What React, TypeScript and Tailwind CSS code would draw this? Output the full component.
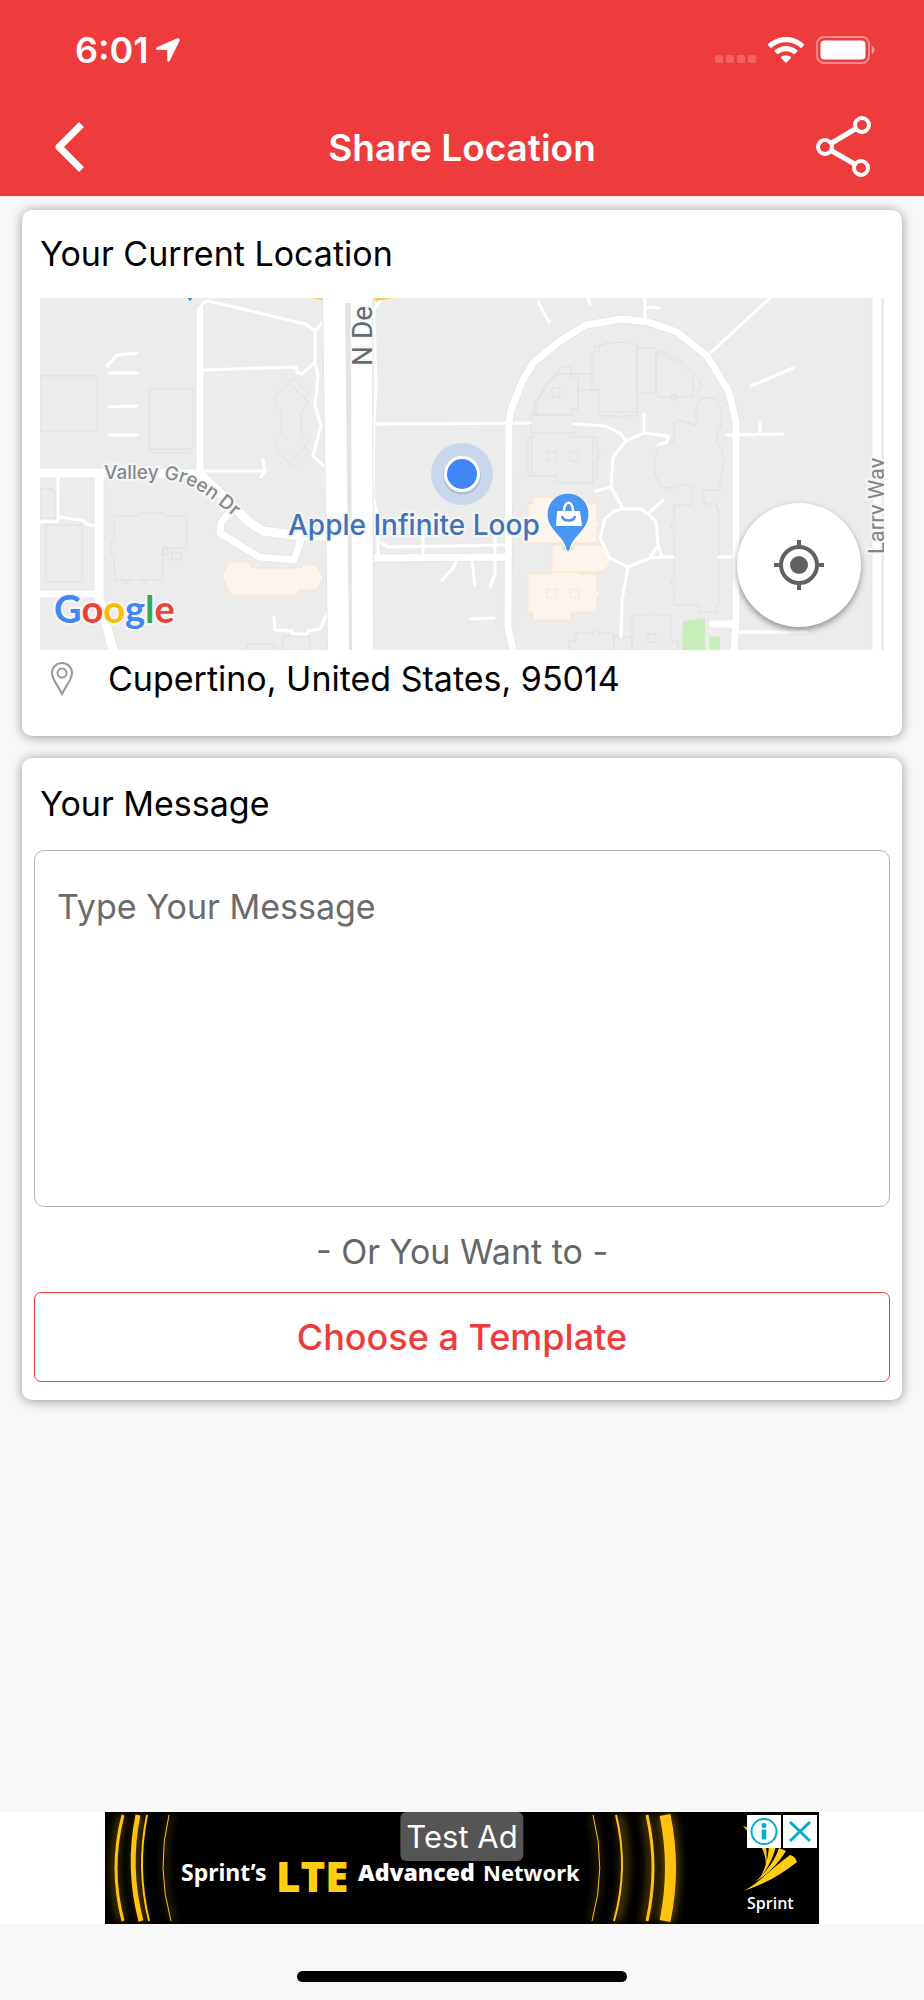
import type { ReactNode } from "react";

function StatusBar() {
  return (
    <div className="flex items-center justify-between pl-[75px] pr-12 pt-8 text-white">
      <div className="flex items-center gap-2">
        <span className="text-[36px] font-semibold leading-9">6:01</span>
        <svg className="h-6 w-6" viewBox="0 0 24 24" fill="currentColor" aria-hidden="true">
          <path d="M21.4.3.9 9.3C-.5 10-.2 11.8 1.300 11.800l9.800.200.100 10c0 1.900 2 2.200 2.700.600L23.700 2.600c.6-1.600-.7-2.900-2.300-2.300z" />
        </svg>
      </div>
      <div className="flex items-center gap-3">
        <div className="flex gap-[3px] pt-[18px]">
          <span className="h-2 w-2 rounded-xs bg-white/20" />
          <span className="h-2 w-2 rounded-xs bg-white/20" />
          <span className="h-2 w-2 rounded-xs bg-white/20" />
          <span className="h-2 w-2 rounded-xs bg-white/20" />
        </div>
        <svg className="h-[27px] w-9" viewBox="0 0 36 27" fill="currentColor" aria-hidden="true">
          <path d="M18 0C11 0 4.700 2.700 0 7.200c-.3.3-.3.700 0 1l2.500 2.500c.3.3.7.3 1 0C7.300 7.200 12.400 5.200 18 5.200s10.700 2 14.500 5.500c.3.3.7.3 1 0L36 8.200c.3-.3.3-.7 0-1C31.300 2.700 25 0 18 0z" />
          <path d="M18 9c-4.400 0-8.400 1.700-11.400 4.400-.3.300-.3.700 0 1l2.700 2.700c.3.300.7.3 1 0 2-1.800 4.700-2.900 7.700-2.900s5.700 1.100 7.700 2.900c.3.3.7.3 1 0l2.700-2.700c.3-.3.3-.7 0-1C26.400 10.700 22.400 9 18 9z" />
          <path d="M18 18.200c-1.900 0-3.600.7-4.900 1.800-.3.3-.3.700 0 1l4.400 4.600c.3.3.7.3 1 0l4.400-4.600c.3-.3.3-.7 0-1-1.300-1.100-3-1.800-4.900-1.800z" />
        </svg>
        <svg className="h-7 w-[60px]" viewBox="0 0 60 28" aria-hidden="true">
          <rect x="1" y="1" width="52" height="26" rx="7" fill="none" stroke="white" strokeOpacity="0.4" strokeWidth="2" />
          <rect x="4.500" y="4.500" width="45" height="19" rx="4" fill="white" />
          <path d="M55.500 10c2 .500 3 2 3 4s-1 3.500-3 4z" fill="white" fillOpacity="0.5" />
        </svg>
      </div>
    </div>
  );
}

function Header() {
  return (
    <header className="bg-[#ee3b3b] pb-4">
      <StatusBar />
      <div className="grid grid-cols-[1fr_auto_1fr] items-center pl-[50px] pr-[50px] pt-12 text-white">
        <button type="button" aria-label="Back" className="flex justify-start">
          <svg className="h-[60px] w-10" viewBox="0 0 40 60" fill="none" stroke="white" strokeWidth="7" strokeLinejoin="round">
            <path d="M31.500 6.500 9 29l22.500 22.500" />
          </svg>
        </button>
        <h1 className="text-[37px] font-semibold leading-[60px]">Share Location</h1>
        <button type="button" aria-label="Share" className="flex justify-end">
          <svg className="h-[64px] w-[60px]" viewBox="0 0 60 64" fill="none" stroke="white" strokeWidth="4">
            <circle cx="48" cy="9" r="7" />
            <circle cx="11" cy="31" r="7" />
            <circle cx="47" cy="52" r="7" />
            <path d="M17 27.500 42 12.500M17 34.500l24.500 14" strokeWidth="5" />
          </svg>
        </button>
      </div>
    </header>
  );
}

function MapView() {
  return (
    <div className="relative">
      <svg
        className="block h-[352px] w-full"
        viewBox="40 298 844 352"
        preserveAspectRatio="xMidYMid slice"
        role="img"
        aria-label="Map of Apple Infinite Loop"
        strokeLinejoin="round"
      >
        <rect x="40" y="298" width="844" height="352" fill="#ececec" />

        {/* buildings */}
        <g fill="none" stroke="#dfdfdf" strokeWidth="1">
          <path d="M40 376h57v55H40zM149 389h44v60h-44zM152 449h38v4h-38z" />
          <path d="m293 378 16 15-5 5 5 5-8 8v23l8 8-5 5 5 5-15 16-18-19v-10l5-5v-23l-6-6v-9zM289 383l15 15M304 447l-15 15" />
          <path d="M40 489h13v4h3v25H40zM46 525h36v57H46z" />
          <path d="M114 516h25v-3h24v3h24v32h-24v32h-48l-1-23-3-1v-16h3zM172 552h9v8h-9zM163 549h5v6h-5zM124 580v3h5v-3M143 580v3h3v-3" />
          <path d="M247 644h26v6h-26zM283 636h27v14h-27zM273 647h10" />
          <path d="M533 415l2-12 10-18 17-18h9v11h7v31h-7v6zM536 415v-12l10-16 11-13h36M578 378v37M552 388h8v9h-8zM578 390h21M531 415h43v18h-43z" />
          <path d="M533 433v4h-5v39h28v7h37v-7h4v-39h-29v-4M593 437v39M532 437v39M597 452a3 3 0 0 1 0 6M547 452h9v9h-9zM570 452h9v9h-9z" />
          <path d="M592 352h7v-6l9-3 20-1 9 3v71h-17l-2 3-2-3h-17v-26h-7zM595 352v-6h6M599 412h38M637 348h19v45h-19z" />
          <path d="M656 352h10l17 11 17 17v11h-7v6h-35l-2-4zM656 355h9l16 10 12 12v14" />
          <circle cx="674" cy="397" r="3" />
          <path d="M696 425v-17l4-8 8-3 9 3 4 8v19l-4 1v15l5 7 2 13-4 17v10h-16v14h13v6h2v95h-2v7h-18v-7h-25v-20a3 3 0 0 1 0-6v-50a3 3 0 0 1 0-6v-18h18v-20h-14v3h-15l-8-13-1-13 4-14 8-6h8v-18l3-4z" />
          <path d="M632 650v-35h18a3 3 0 0 1 5 0h16v26h7v9zM648 634h8v8h-8zM569 650v-9h7v-8h17a3 3 0 0 1 6 0h15v17zM614 637h18v13h-18z" />
        </g>
        <g fill="#fdf5ed" stroke="#fbe3c8" strokeWidth="1">
          <path d="m222 577 7-15h20l3 6h49l2-3h13l7 13-6 12h-19v5h-65l-4-4z" />
          <path d="M528 504h5v-7h38v7h26v16a3 3 0 0 1 0 6v17h-69zM528 574h24v-2h28v2h17v17a3 3 0 0 1 0 6v15h-26v8h-38v-8h-5z" />
          <path d="M552 545h45a13 13 0 0 1 0 27h-45zM547 589h9v9h-9zM570 589h9v9h-9z" />
        </g>
        <path d="m683 621 22-3v32h-23zM709 636l11 1v13h-10z" fill="#c8eebb" />

        {/* roads, each drawn over a faint casing */}
        <g fill="none" strokeLinecap="round">
          <g stroke="#e6e6e6">
            <path strokeWidth="9" d="M200 310v160M227 515l-6 8-1 10 39 24 35 3 7-20M40 594h59M372 558l135-1M513 650l-5-23 1-204 2-13 11-28 11-19 27-22 26-16 36-6 26 3 29 10 30 24 22 36 7 30v201l-2 27" />
            <path strokeWidth="11" d="M40 473h70l90 1 20 19 30 30 13 8 37 5h27M99 473v124l14 53M877 290v370" />
          </g>
          <g stroke="white">
            <path strokeWidth="7" d="M200 310v160M227 515l-6 8-1 10 39 24 35 3 7-20M40 594h59M372 558l135-1M513 650l-5-23 1-204 2-13 11-28 11-19 27-22 26-16 36-6 26 3 29 10 30 24 22 36 7 30v201l-2 27M712 624h24" />
            <path strokeWidth="9" d="M40 473h70l90 1 20 19 30 30 13 8 37 5h27M99 473v124l14 53M877 290v370" />
            <path
              strokeWidth="3"
              d="M200 308l3-5 6-2 96 23 10 7 7-8h5M315 331v31l3 13-3 30 6 21-8 30 14 13M315 362l-13 12-5-2-1-5-93 3M107 366l10-11 20-2M109 373h28M109 407l28-1M109 435h28M204 471h61M263 460l2 11-4 6M58 477v43M40 523l3-2 14 1 2-5 23 3 5 4 8 2M274 617l1 13 17 1 1 3h14l1-3 12-2 8-17M300 323l6 1"
            />
            <path
              strokeWidth="3"
              d="M382 298l-8 12 2 77-2 40-1 70 3 13 2 30v16M380 542l8 5 117-2M423 527v26M495 537v37l-5 13M456 561l-2 6-12 13M472 561l3 24M471 619l23-1M373 424l157-1M538 302l11 20M588 298l2 6"
            />
            <path
              strokeWidth="3"
              d="M574 424l31 2 15 7 6 8 18-8 24 3-1 6-9 3M644 433v-19M626 441l-13 16-2 30 12 22M596 491l15-4M623 509h18l7 5 8 8 2 23-8 13-22 9-18-9-10-20 5-19 9-8zM648 514l15-14M658 545l4 12-12 1M662 557h11M628 567l-6 33-1 37M719 557h14M645 298v23M645 307l14 1M707 356l63-58M751 386l42-18M727 435l56-1M760 422v12M740 632h67"
            />
          </g>
        </g>
        <path d="M322 298h51l1 352H327z" fill="#e4e4e4" />
        <path d="M323 298h28v5h-6l4 347h-21z" fill="white" />
        <path d="M351 298h21l1 352h-21z" fill="white" />
        <path d="M311 298h11v2zM374 298h21l-19 3z" fill="#fbc95a" />
        <path d="M186 297h8l-4 5z" fill="#4285f4" stroke="white" />

        {/* labels */}
        <g stroke="#f6f6f6" strokeWidth="4" style={{ paintOrder: "stroke" }} fontFamily="Inter, sans-serif">
          <path id="valley-green" d="M104 479H160C190 480 205 493 245 526" fill="none" stroke="none" />
          <text fontSize="19" fontWeight="500" fill="#85898c">
            <textPath href="#valley-green">Valley Green Dr</textPath>
          </text>
          <text x="288" y="535" fontSize="28" fontWeight="500" fill="#4173b5">
            Apple Infinite Loop
          </text>
          <text transform="translate(372 366) rotate(-90)" fontSize="28" fontFamily="Roboto, sans-serif" fill="#5f6b70">
            N De
          </text>
          <text transform="translate(884 554) rotate(-90)" fontSize="22" fontFamily="Roboto, sans-serif" fill="#7f8588">
            Larry Way
          </text>
          <text x="54" y="623" fontSize="38" fontWeight="700" fontFamily="Lato, sans-serif">
            <tspan fill="#4285f4">G</tspan>
            <tspan fill="#ea4335">o</tspan>
            <tspan fill="#fbbc05">o</tspan>
            <tspan fill="#4285f4">g</tspan>
            <tspan fill="#34a853">l</tspan>
            <tspan fill="#ea4335">e</tspan>
          </text>
        </g>

        {/* current position */}
        <circle cx="462" cy="474" r="31" fill="#4285f4" fillOpacity="0.2" />
        <circle cx="462" cy="476" r="19" fill="black" fillOpacity="0.1" />
        <circle cx="462" cy="474" r="18" fill="white" />
        <circle cx="462" cy="474" r="15" fill="#4285f4" />

        {/* store pin */}
        <ellipse cx="568" cy="548" rx="6" ry="3" fill="black" fillOpacity="0.08" />
        <path
          d="M568 493a21 21 0 0 0-21 21c0 7 3 12 7 17 5 6 11 11 12 19q2 3 4 0c1-8 7-13 12-19 4-5 7-10 7-17a21 21 0 0 0-21-21z"
          fill="#4a94f2"
          stroke="white"
          strokeWidth="1"
        />
        <path d="M557 511h23l2 15h-26z" fill="white" />
        <path d="M564 511c0-11 9-11 9 0" fill="none" stroke="white" strokeWidth="2.500" />
        <path d="M562 516c1 6 12 6 13 0" fill="none" stroke="#4a94f2" strokeWidth="2.500" />
      </svg>
      <button
        type="button"
        aria-label="Centre on my location"
        className="absolute right-[23px] bottom-[23px] flex h-[124px] w-[124px] items-center justify-center rounded-full bg-white shadow-[0_3px_6px_rgba(0,0,0,0.4)]"
      >
        <svg className="h-[50px] w-[50px]" viewBox="0 0 50 50" fill="none" stroke="#616161">
          <circle cx="25" cy="25" r="18" strokeWidth="4" />
          <circle cx="25" cy="25" r="9" fill="#616161" stroke="none" />
          <path d="M25 0v6M25 44v6M0 25h6M44 25h6" strokeWidth="4" />
        </svg>
      </button>
    </div>
  );
}

function Card({ children }: { children: ReactNode }) {
  return <section className="rounded-[10px] bg-white px-3 shadow-[0_1px_12px_rgba(0,0,0,0.4)]">{children}</section>;
}

function AdBanner() {
  return (
    <div className="flex justify-center bg-white">
      <div className="relative h-28 w-[714px] overflow-hidden bg-black">
        <svg className="block h-full w-full" viewBox="0 0 714 112" fill="none" role="img" aria-label="Sprint's LTE Advanced Network">
          <defs>
            <filter id="glow" x="-100%" y="-10%" width="300%" height="120%">
              <feGaussianBlur stdDeviation="4" />
            </filter>
          </defs>
          <g stroke="#c99400" strokeOpacity="0.450" strokeWidth="7" filter="url(#glow)">
            <path d="M17 3Q3 56 17 109M36 3Q25 56 39 109" />
            <path d="M66 3Q53 56 68 109M487 3Q501 56 486 109" strokeWidth="3" />
            <path d="M514 3Q527 56 512 109M540 3Q552 56 540 109" />
            <path d="M560 3Q571 56 560 109" strokeWidth="18" />
          </g>
          <g stroke="#ffc20e">
            <path d="M18 3Q4 56 18 109" strokeWidth="3" />
            <path d="M33 3Q22 56 36 109" strokeWidth="5" />
            <path d="M42 3Q31 56 44 109" strokeWidth="2" />
            <path d="M64 3Q51 56 66 109" strokeWidth="1" />
            <path d="M488 3Q502 56 487 109" strokeWidth="1" />
            <path d="M511 3Q524 56 509 109" strokeWidth="2" />
            <path d="M542 3Q554 56 542 109" strokeWidth="3" />
            <path d="M560 3Q571 56 560 109" strokeWidth="11" />
          </g>
          <g fontFamily="Open Sans, sans-serif" fontWeight="700" fill="white">
            <text x="76" y="69" fontSize="23" fontFamily="Noto Sans, sans-serif">Sprint’s</text>
            <text x="171" y="80" fontSize="42" fontWeight="800" fill="#ffcf0f">LTE</text>
            <text x="253" y="69" fontSize="23" fontWeight="800">Advanced</text>
            <text x="378" y="69" fontSize="22" fontFamily="Noto Sans, sans-serif">Network</text>
            <text x="642" y="97" fontSize="16" fontWeight="600">Sprint</text>
          </g>
          <g fill="#ffcf0f">
            <path d="M639 79c16-9 28-23 46-36q5 1 7 7c-16 13-33 22-53 29z" />
            <path d="M650 70c10-9 20-21 24-34l7 3c-8 13-18 23-31 31z" />
            <path d="M655 66c5-9 8-19 9-32h7c-3 13-9 23-16 32zM660 59c2-9 0-17-4-25h5c1 9 1 17-1 25zM638 14l6 2v5z" />
          </g>
        </svg>
        <span className="absolute top-0 left-1/2 -translate-x-1/2 rounded-md bg-[#555] px-[6px] text-[31px] leading-[49px] whitespace-nowrap text-white">
          Test Ad
        </span>
        <div className="absolute top-[3px] right-[2px] flex gap-[2px]">
          <button type="button" aria-label="About this ad" className="h-[33px] w-[34px] bg-white">
            <svg viewBox="0 0 34 33" fill="none" stroke="#00aecd" strokeWidth="2">
              <circle cx="17" cy="16.500" r="12.500" />
              <circle cx="17" cy="10.500" r="2.500" fill="#00aecd" stroke="none" />
              <path d="M17 14.500v10" strokeWidth="4.500" />
            </svg>
          </button>
          <button type="button" aria-label="Close ad" className="h-[33px] w-[34px] bg-white">
            <svg viewBox="0 0 34 33" fill="none" stroke="#00aecd" strokeWidth="3">
              <path d="m7 7 20 19M27 7 7 26" />
            </svg>
          </button>
        </div>
      </div>
    </div>
  );
}

export default function App() {
  return (
    <div className="flex min-h-screen flex-col bg-[#f8f8f8] font-[Inter,sans-serif] text-black">
      <Header />
      <main className="flex flex-1 flex-col gap-[22px] px-[22px] pt-[14px]">
        <Card>
          <div className="px-[6px] pb-8">
            <h2 className="pt-5 text-[34px] leading-[48px]">Your Current Location</h2>
            <div className="pt-5">
              <MapView />
            </div>
            <div className="flex items-center gap-[35px] pt-1 pl-[11px]">
              <svg className="h-[34px] w-[22px]" viewBox="0 0 22 34" fill="none" stroke="#9a9a9a" strokeWidth="2" aria-hidden="true">
                <path d="M11 1C5 1 1 5.500 1 11c0 6.500 6 12.500 10 21 4-8.500 10-14.500 10-21C21 5.500 17 1 11 1z" />
                <circle cx="11" cy="11" r="4.500" />
              </svg>
              <p className="text-[34px] leading-[50px]">Cupertino, United States, 95014</p>
            </div>
          </div>
        </Card>
        <Card>
          <div className="pb-[18px]">
            <label htmlFor="message" className="block px-[6px] pt-[22px] pb-[22px] text-[34px] leading-[48px]">
              Your Message
            </label>
            <textarea
              id="message"
              placeholder="Type Your Message"
              className="block h-[357px] w-full resize-none rounded-[10px] border border-[#b5b5b5] px-[22px] py-8 text-[34px] leading-[48px] placeholder:text-[#6b6b6b]"
            />
            <p className="pt-[21px] pb-4 text-center text-[34px] leading-[48px] text-[#666]">- Or You Want to -</p>
            <button
              type="button"
              className="block h-[90px] w-full rounded-[7px] border border-[#ee3b3b] text-[36px] font-medium text-[#ee3b3b]"
            >
              Choose a Template
            </button>
          </div>
        </Card>
      </main>
      <footer>
        <AdBanner />
        <div className="flex justify-center pt-[47px] pb-[18px]">
          <div className="h-[11px] w-[330px] rounded-full bg-black" />
        </div>
      </footer>
    </div>
  );
}
